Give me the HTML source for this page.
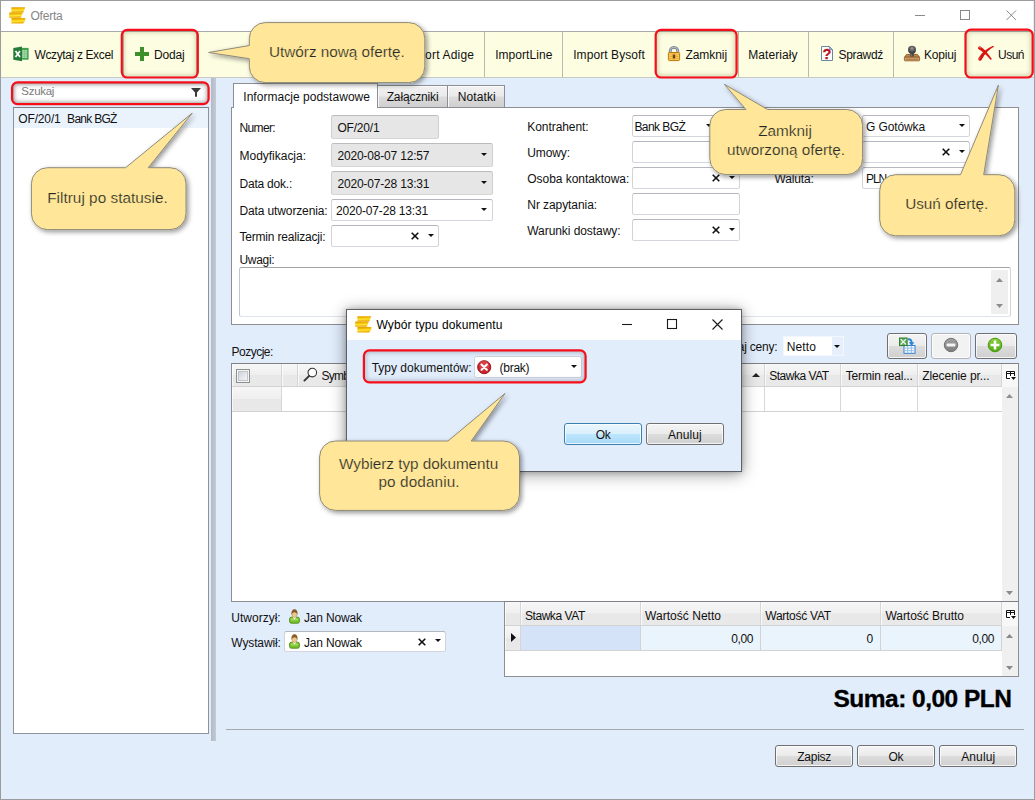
<!DOCTYPE html><html lang="pl"><head><meta charset="utf-8"><title>Oferta</title><style>
html,body{margin:0;padding:0;}
body{width:1035px;height:800px;overflow:hidden;position:relative;background:#E2EDFC;font-family:"Liberation Sans",sans-serif;font-size:12px;color:#111;}
.a{position:absolute;box-sizing:border-box;}
.t{position:absolute;white-space:nowrap;line-height:1;}
.fld{position:absolute;box-sizing:border-box;background:#fff;border:1px solid;border-color:#b4b7bd #d0d3d8 #d3d7dd #d0d3d8;border-radius:2.5px;}
.fld.g{background:#e6e6e6;border-color:#bcbcbc #cfcfcf #d6d6d6 #cfcfcf;}
.red{position:absolute;box-sizing:border-box;border:2px solid #f3141c;border-radius:7px;box-shadow:inset 0 0 5px 1px rgba(60,60,30,.28);}
.ct{-webkit-text-stroke:.22px #FFE699;}
.suma{-webkit-text-stroke:.35px #000;}
.sep{position:absolute;top:32px;height:45px;width:1px;background:#b9b9ad;}
.btn{position:absolute;box-sizing:border-box;border:1px solid #707070;border-radius:3px;background:linear-gradient(#f4f4f4 0%,#ebebeb 48%,#dcdcdc 52%,#d0d0d0 100%);box-shadow:inset 0 0 0 1px rgba(255,255,255,.75);}
.hdr{position:absolute;box-sizing:border-box;background:linear-gradient(#f7f7f7 0%,#efefef 48%,#e8e8e8 52%,#e9e9e9 100%);border-right:1px solid #d6d6d6;border-bottom:1px solid #d2d2d2;box-shadow:inset 1px 0 0 rgba(255,255,255,.7);}
svg{position:absolute;overflow:visible;}
</style></head><body>
<div class="a" style="left:0;top:0;width:1035px;height:800px;border:1px solid #9a9c9e;z-index:50;pointer-events:none"></div>
<div class="a" style="left:1px;top:1px;width:1032px;height:30px;background:#fff"></div>
<div class="a" style="left:1px;top:31px;width:1032px;height:1px;background:#a9a9a9"></div>
<div class="a" style="left:1px;top:32px;width:1032px;height:45px;background:#FDFDE2"></div>
<div class="a" style="left:1px;top:77px;width:1033px;height:1px;background:#c9cac4"></div>
<svg style="left:9px;top:7px" width="17" height="17" viewBox="0 0 17 17"><defs><linearGradient id="g1" x1="0" y1="0" x2=".1" y2="1"><stop offset="0" stop-color="#e39a00"/><stop offset=".3" stop-color="#f2b800"/><stop offset=".62" stop-color="#ffe632"/><stop offset="1" stop-color="#eaa600"/></linearGradient></defs><g fill="url(#g1)"><path d="M2.4 0.2H16.3L14.3 5.4H2.4Z"/><path d="M0.2 5.6H13.8L11.8 10.8H0.2Z"/><path d="M2.4 11H16.3V13.6L14.2 16.4H2.4Z"/></g></svg>
<span class="t " style="left:30.5px;top:9.84px;font-size:12px;color:#868686;letter-spacing:-0.227px;">Oferta</span>
<svg style="left:900px;top:0" width="133" height="31"><g stroke="#8a8a8a" stroke-width="1" fill="none"><path d="M15 15.5H25"/><rect x="60.5" y="10.5" width="9" height="9"/><path d="M106.5 10.5L116 20M116 10.5L106.5 20"/></g></svg>
<svg style="left:13px;top:46px" width="16" height="16" viewBox="0 0 16 16"><rect x="8" y="1.9" width="7.6" height="11.8" fill="#41a04e"/><rect x="9.2" y="4" width="4.9" height="8" fill="#a9d9ae"/><path d="M9.2 5.6H14.1M9.2 7.2H14.1M9.2 8.8H14.1M9.2 10.4H14.1M11.6 4V12" stroke="#74bd7e" stroke-width=".5"/><path d="M0.3 1.9L9 0.4V15.3L0.3 13.7Z" fill="#277b39"/><path d="M2.5 5L7 11M7 5L2.5 11" stroke="#fff" stroke-width="1.7"/></svg>
<span class="t " style="left:34.5px;top:48.84px;font-size:12px;letter-spacing:-0.368px;">Wczytaj z Excel</span>
<svg style="left:135px;top:47px" width="14" height="14" viewBox="0 0 14 14"><path d="M5 0H9V5H14V9H9V14H5V9H0V5H5Z" fill="#3d8f2c"/></svg>
<span class="t " style="left:154px;top:48.84px;font-size:12px;letter-spacing:-0.152px;">Dodaj</span>
<span class="t " style="left:404.5px;top:48.84px;font-size:12px;letter-spacing:0.194px;">Import Adige</span>
<div class="sep" style="left:484px"></div>
<span class="t " style="left:495.2px;top:48.84px;font-size:12px;letter-spacing:0.050px;">ImportLine</span>
<div class="sep" style="left:562px"></div>
<span class="t " style="left:573.2px;top:48.84px;font-size:12px;letter-spacing:0.078px;">Import Bysoft</span>
<svg style="left:667px;top:45px" width="14" height="17" viewBox="0 0 14 17"><path d="M3.2 8V6.1A3.8 3.8 0 0 1 10.8 6.1V8" fill="none" stroke="#6f7889" stroke-width="2.8"/><path d="M3.2 8V6.1A3.8 3.8 0 0 1 10.8 6.1V8" fill="none" stroke="#b4bbc8" stroke-width="1.3"/><rect x="1.4" y="7.5" width="11.2" height="8.1" rx="1" fill="#f2b235" stroke="#c07a10" stroke-width="1"/><rect x="2.5" y="8.6" width="9" height="5.9" fill="#fbdc7e"/><path d="M2.9 9.9H5.5M2.9 11.6H5.5M2.9 13.3H5.5M8.5 9.9H11.1M8.5 11.6H11.1M8.5 13.3H11.1" stroke="#e79f1f" stroke-width=".9"/><rect x="5.9" y="9.4" width="2.2" height="4.2" rx=".5" fill="#5b3b06"/><rect x="5.6" y="8.9" width="2.8" height="5.2" rx=".6" fill="none" stroke="#d9951c" stroke-width=".6"/></svg>
<span class="t " style="left:685.4px;top:48.84px;font-size:12px;letter-spacing:-0.059px;">Zamknij</span>
<span class="t " style="left:748.2px;top:48.84px;font-size:12px;letter-spacing:0.068px;">Materiały</span>
<div class="sep" style="left:808px"></div>
<svg style="left:820px;top:45px" width="14" height="17" viewBox="0 0 14 17"><path d="M1.5 1.5H9.3L12.5 4.7V15.5H1.5Z" fill="#fff" stroke="#6f85a0" stroke-width="1"/><path d="M9.3 1.5V4.7H12.5Z" fill="#aebbd0" stroke="#6f85a0" stroke-width=".8"/><text x="7" y="14.2" font-family="Liberation Sans, sans-serif" font-size="14.5" font-weight="bold" fill="#b8121b" stroke="#b8121b" stroke-width=".3" text-anchor="middle">?</text></svg>
<span class="t " style="left:838.5px;top:48.84px;font-size:12px;letter-spacing:-0.327px;">Sprawdź</span>
<div class="sep" style="left:893px"></div>
<svg style="left:903px;top:45px" width="18" height="17" viewBox="0 0 18 17"><defs><radialGradient id="kn" cx=".5" cy=".35" r=".6"><stop offset="0" stop-color="#9c9c9c"/><stop offset=".55" stop-color="#5a5a5c"/><stop offset="1" stop-color="#38383a"/></radialGradient></defs><path d="M3.6 9.4H14.4L16.6 12.3H1.4Z" fill="#bd8746" stroke="#8f5a28" stroke-width=".9" stroke-linejoin="round"/><rect x="1.4" y="12.2" width="15.2" height="3.6" rx=".8" fill="#d6b389" stroke="#8f5a28" stroke-width=".9"/><rect x="2.6" y="13.6" width="12.8" height="1.3" fill="#b57b3a"/><rect x="7.3" y="7.3" width="3.5" height="4.2" fill="#48484b"/><rect x="8.2" y="7.6" width="1" height="3.6" fill="#77777a"/><circle cx="9" cy="4.7" r="4" fill="url(#kn)"/></svg>
<span class="t " style="left:923.9px;top:48.84px;font-size:12px;letter-spacing:-0.143px;">Kopiuj</span>
<svg style="left:977px;top:45px" width="18" height="17" viewBox="0 0 18 17"><path d="M0.9 2.7Q1.5 0.5 3.5 1.4Q9 5 14.9 14.1L13.7 15Q7.5 7.6 1.7 4.2Q0.7 3.6 0.9 2.7Z" fill="#de1a14"/><path d="M17 0.9L16.5 2.1Q9.2 6 4.8 14.6Q3.8 16.4 2.1 15.5Q0.7 14.7 1.5 13Q6 5 15.6 0.9Z" fill="#d8120e"/><path d="M1.6 2.4Q2.4 1.6 3.6 2.6" stroke="#f5847c" stroke-width="1" fill="none"/><path d="M2.2 14.4Q2.6 13.4 3.4 12.4" stroke="#ef5a52" stroke-width="1" fill="none"/></svg>
<span class="t " style="left:998px;top:48.84px;font-size:12px;letter-spacing:-0.504px;">Usuń</span>
<svg style="left:0;top:0;z-index:5;pointer-events:none" width="1035" height="800"><defs><clipPath id="rc1"><rect x="121.8" y="29.9" width="76" height="47.6" rx="5.4"/></clipPath><filter id="rf1" x="-10%" y="-20%" width="120%" height="140%"><feGaussianBlur stdDeviation="2.2"/></filter></defs><g clip-path="url(#rc1)"><rect x="121.8" y="29.9" width="76" height="47.6" rx="5.4" fill="none" stroke="rgba(90,90,40,.30)" stroke-width="4.6" filter="url(#rf1)"/></g><rect x="121.8" y="29.9" width="76" height="47.6" rx="5.4" fill="none" stroke="#f60f18" stroke-width="2.2"/></svg>
<svg style="left:0;top:0;z-index:5;pointer-events:none" width="1035" height="800"><defs><clipPath id="rc2"><rect x="655.7" y="29.9" width="80.9" height="47.6" rx="5.4"/></clipPath><filter id="rf2" x="-10%" y="-20%" width="120%" height="140%"><feGaussianBlur stdDeviation="2.2"/></filter></defs><g clip-path="url(#rc2)"><rect x="655.7" y="29.9" width="80.9" height="47.6" rx="5.4" fill="none" stroke="rgba(90,90,40,.30)" stroke-width="4.6" filter="url(#rf2)"/></g><rect x="655.7" y="29.9" width="80.9" height="47.6" rx="5.4" fill="none" stroke="#f60f18" stroke-width="2.2"/></svg>
<svg style="left:0;top:0;z-index:5;pointer-events:none" width="1035" height="800"><defs><clipPath id="rc3"><rect x="965.5" y="29.7" width="67.2" height="47.8" rx="5.4"/></clipPath><filter id="rf3" x="-10%" y="-20%" width="120%" height="140%"><feGaussianBlur stdDeviation="2.2"/></filter></defs><g clip-path="url(#rc3)"><rect x="965.5" y="29.7" width="67.2" height="47.8" rx="5.4" fill="none" stroke="rgba(90,90,40,.30)" stroke-width="4.6" filter="url(#rf3)"/></g><rect x="965.5" y="29.7" width="67.2" height="47.8" rx="5.4" fill="none" stroke="#f60f18" stroke-width="2.2"/></svg>
<div class="sep" style="left:123px"></div>
<div class="sep" style="left:196px"></div>
<div class="sep" style="left:738px"></div>
<div class="a" style="left:13px;top:83px;width:196px;height:21px;background:#fff;border:1px solid #d6d6d6;border-radius:4px;box-shadow:inset 0 0 3px rgba(0,0,0,.18)"></div>
<span class="t " style="left:21.3px;top:86.47px;font-size:11.5px;color:#7b7b7b;letter-spacing:-0.289px;">Szukaj</span>
<svg style="left:191px;top:88.2px" width="10" height="8.8" viewBox="0 0 10 8.8"><path d="M0 0H10L6 4.4V8.8H4V4.4Z" fill="#3a3a3a"/></svg>
<div class="a" style="left:13px;top:107px;width:196px;height:627px;background:#fff;border:1px solid #8f9296;border-top-color:#7b7e82"></div>
<div class="a" style="left:14px;top:108px;width:194px;height:20px;background:#EAF3FC"></div>
<svg style="left:0;top:0;z-index:5;pointer-events:none" width="1035" height="800"><defs><clipPath id="rc4"><rect x="12" y="82.4" width="196.6" height="21.7" rx="5.4"/></clipPath><filter id="rf4" x="-10%" y="-20%" width="120%" height="140%"><feGaussianBlur stdDeviation="2.2"/></filter></defs><g clip-path="url(#rc4)"><rect x="12" y="82.4" width="196.6" height="21.7" rx="5.4" fill="none" stroke="rgba(60,60,60,.38)" stroke-width="4.6" filter="url(#rf4)"/></g><rect x="12" y="82.4" width="196.6" height="21.7" rx="5.4" fill="none" stroke="#f60f18" stroke-width="2.2"/></svg>
<span class="t " style="left:18.3px;top:113.04px;font-size:12px;letter-spacing:-0.151px;">OF/20/1</span>
<span class="t " style="left:67.1px;top:113.04px;font-size:12px;letter-spacing:-0.720px;">Bank BGŻ</span>
<div class="a" style="left:211px;top:78px;width:5px;height:663px;background:linear-gradient(90deg,#b3bac6,#c3cad6)"></div>
<div class="a" style="left:377px;top:85px;width:71px;height:23px;border:1px solid #8c8e94;background:linear-gradient(#f2f2f2 0%,#eaeaea 48%,#dcdcdc 52%,#cfcfcf 100%);box-shadow:inset 1px 1px 0 rgba(255,255,255,.8)"></div>
<div class="a" style="left:447px;top:85px;width:58px;height:23px;border:1px solid #8c8e94;background:linear-gradient(#f2f2f2 0%,#eaeaea 48%,#dcdcdc 52%,#cfcfcf 100%);box-shadow:inset 1px 1px 0 rgba(255,255,255,.8)"></div>
<div class="a" style="left:231px;top:107px;width:788px;height:218px;background:#fff;border:1px solid #8c8e94"></div>
<div class="a" style="left:233px;top:83px;width:145px;height:25px;background:#fff;border:1px solid #8c8e94;border-bottom:none"></div>
<span class="t " style="left:243.3px;top:90.84px;font-size:12px;letter-spacing:0.030px;">Informacje podstawowe</span>
<span class="t " style="left:386.7px;top:90.84px;font-size:12px;letter-spacing:-0.156px;">Załączniki</span>
<span class="t " style="left:457.8px;top:90.84px;font-size:12px;letter-spacing:0.106px;">Notatki</span>
<span class="t " style="left:239.5px;top:122.04px;font-size:12px;letter-spacing:-0.641px;">Numer:</span>
<span class="t " style="left:239.5px;top:150.04px;font-size:12px;letter-spacing:-0.017px;">Modyfikacja:</span>
<span class="t " style="left:239.5px;top:178.04px;font-size:12px;letter-spacing:-0.220px;">Data dok.:</span>
<span class="t " style="left:239.5px;top:205.04px;font-size:12px;letter-spacing:-0.128px;">Data utworzenia:</span>
<span class="t " style="left:239.5px;top:231.04px;font-size:12px;letter-spacing:-0.198px;">Termin realizacji:</span>
<span class="t " style="left:239.5px;top:254.04px;font-size:12px;letter-spacing:-0.315px;">Uwagi:</span>
<div class="fld g" style="left:331px;top:115px;width:108px;height:24px"></div>
<div class="fld g" style="left:331px;top:143px;width:162px;height:24px"></div>
<div class="fld g" style="left:331px;top:171px;width:162px;height:24px"></div>
<div class="fld" style="left:331px;top:199px;width:162px;height:22px"></div>
<div class="fld" style="left:331px;top:225px;width:108px;height:22px"></div>
<span class="t " style="left:337.4px;top:122.04px;font-size:12px;letter-spacing:-0.194px;">OF/20/1</span>
<span class="t " style="left:337.4px;top:150.04px;font-size:12px;letter-spacing:-0.178px;">2020-08-07 12:57</span>
<span class="t " style="left:337.4px;top:178.04px;font-size:12px;letter-spacing:-0.178px;">2020-07-28 13:31</span>
<span class="t " style="left:336px;top:205.04px;font-size:12px;letter-spacing:-0.172px;">2020-07-28 13:31</span>
<svg style="left:480.5px;top:152.9px" width="6" height="3" viewBox="0 0 6 3"><path d="M0 0H6L3 3Z" fill="#111"/></svg>
<svg style="left:480.5px;top:180.9px" width="6" height="3" viewBox="0 0 6 3"><path d="M0 0H6L3 3Z" fill="#111"/></svg>
<svg style="left:480.5px;top:208.4px" width="6" height="3" viewBox="0 0 6 3"><path d="M0 0H6L3 3Z" fill="#111"/></svg>
<svg style="left:411px;top:232.2px" width="8" height="8" viewBox="0 0 8 8"><path d="M0.7 0.7L7.3 7.3M7.3 0.7L0.7 7.3" stroke="#111" stroke-width="1.6"/></svg>
<svg style="left:428px;top:234.4px" width="6" height="3" viewBox="0 0 6 3"><path d="M0 0H6L3 3Z" fill="#111"/></svg>
<span class="t " style="left:527.3px;top:121.04px;font-size:12px;letter-spacing:-0.068px;">Kontrahent:</span>
<span class="t " style="left:527.3px;top:147.04px;font-size:12px;letter-spacing:-0.124px;">Umowy:</span>
<span class="t " style="left:527.3px;top:173.04px;font-size:12px;letter-spacing:-0.049px;">Osoba kontaktowa:</span>
<span class="t " style="left:527.3px;top:199.04px;font-size:12px;letter-spacing:-0.077px;">Nr zapytania:</span>
<span class="t " style="left:527.3px;top:225.04px;font-size:12px;letter-spacing:-0.067px;">Warunki dostawy:</span>
<div class="fld" style="left:632px;top:115px;width:108px;height:22px"></div>
<div class="fld" style="left:632px;top:141px;width:108px;height:22px"></div>
<div class="fld" style="left:632px;top:167px;width:108px;height:22px"></div>
<div class="fld" style="left:632px;top:193px;width:108px;height:22px"></div>
<div class="fld" style="left:632px;top:219px;width:108px;height:22px"></div>
<span class="t " style="left:634.4px;top:121.04px;font-size:12px;letter-spacing:-0.570px;">Bank BGŻ</span>
<svg style="left:706px;top:124.4px" width="6" height="3" viewBox="0 0 6 3"><path d="M0 0H6L3 3Z" fill="#111"/></svg>
<svg style="left:711.5px;top:173.7px" width="8" height="8" viewBox="0 0 8 8"><path d="M0.7 0.7L7.3 7.3M7.3 0.7L0.7 7.3" stroke="#111" stroke-width="1.6"/></svg>
<svg style="left:728.5px;top:175.9px" width="6" height="3" viewBox="0 0 6 3"><path d="M0 0H6L3 3Z" fill="#111"/></svg>
<svg style="left:711.5px;top:225.7px" width="8" height="8" viewBox="0 0 8 8"><path d="M0.7 0.7L7.3 7.3M7.3 0.7L0.7 7.3" stroke="#111" stroke-width="1.6"/></svg>
<svg style="left:728.5px;top:227.9px" width="6" height="3" viewBox="0 0 6 3"><path d="M0 0H6L3 3Z" fill="#111"/></svg>
<div class="fld" style="left:862px;top:115px;width:108px;height:22px"></div>
<div class="fld" style="left:862px;top:141px;width:108px;height:22px"></div>
<div class="fld" style="left:862px;top:167px;width:108px;height:22px"></div>
<span class="t " style="left:774.5px;top:173.04px;font-size:12px;letter-spacing:-0.150px;">Waluta:</span>
<span class="t " style="left:866px;top:121.04px;font-size:12px;letter-spacing:-0.115px;">G Gotówka</span>
<svg style="left:958.5px;top:124.4px" width="6" height="3" viewBox="0 0 6 3"><path d="M0 0H6L3 3Z" fill="#111"/></svg>
<svg style="left:941.5px;top:148.2px" width="8" height="8" viewBox="0 0 8 8"><path d="M0.7 0.7L7.3 7.3M7.3 0.7L0.7 7.3" stroke="#111" stroke-width="1.6"/></svg>
<svg style="left:958.5px;top:150.4px" width="6" height="3" viewBox="0 0 6 3"><path d="M0 0H6L3 3Z" fill="#111"/></svg>
<span class="t " style="left:866px;top:173.04px;font-size:12px;letter-spacing:-1.115px;">PLN</span>
<div class="fld" style="left:239px;top:267px;width:772px;height:50px;border-color:#a2a4a8 #d0d3d8 #dfe4eb #c2c5ca"></div>
<div class="a" style="left:991px;top:270px;width:17px;height:44px;background:#efefef"></div>
<svg style="left:996px;top:277.6px" width="7" height="4"><path d="M0 4H7L3.5 0Z" fill="#8c8c8c"/></svg>
<svg style="left:996px;top:304.2px" width="7" height="4"><path d="M0 0H7L3.5 4Z" fill="#8c8c8c"/></svg>
<span class="t " style="left:231.6px;top:346.04px;font-size:12px;letter-spacing:-0.520px;">Pozycje:</span>
<span class="t " style="left:710.5px;top:341.04px;font-size:12px;letter-spacing:-0.198px;">Rodzaj ceny:</span>
<div class="a" style="left:783px;top:336px;width:61px;height:20px;background:#fff;border:1px solid #f2f7fe"></div>
<div class="a" style="left:832px;top:337px;width:11px;height:18px;background:#e6effb"></div>
<span class="t " style="left:786.7px;top:341.04px;font-size:12px;letter-spacing:0.122px;">Netto</span>
<svg style="left:834.4px;top:345.09999999999997px" width="6" height="3" viewBox="0 0 6 3"><path d="M0 0H6L3 3Z" fill="#111"/></svg>
<div class="btn" style="left:887px;top:333px;width:40px;height:26px"></div>
<div class="btn" style="left:931px;top:333px;width:40px;height:26px;border-color:#b5b5b5;background:#f2f2f2"></div>
<div class="btn" style="left:975px;top:333px;width:42px;height:26px"></div>
<svg style="left:899px;top:337px" width="17" height="17" viewBox="0 0 17 17"><rect x="5" y="8.5" width="11" height="7.8" fill="#fff" stroke="#2f7fd0" stroke-width="1"/><path d="M8.7 8.5V16.3M12.3 8.5V16.3M5 11.1H16M5 13.7H16" stroke="#86b6e6" stroke-width=".9"/><rect x="0.5" y="1" width="7.6" height="7.6" fill="#5fae5c" stroke="#2f7d32" stroke-width="1"/><path d="M1.6 2.1L7 7.5M7 2.1L1.6 7.5" stroke="#e9f6e8" stroke-width="1.3"/><path d="M9 2.2C12 2 12.6 3.6 12.6 6" fill="none" stroke="#2b86d6" stroke-width="1.9"/><path d="M9.9 5.3H15.3L12.6 8.9Z" fill="#2b86d6"/></svg>
<svg style="left:943px;top:337px" width="16" height="16" viewBox="0 0 16 16"><defs><linearGradient id="mg" x1="0" y1="0" x2="0" y2="1"><stop offset="0" stop-color="#a3a3a3"/><stop offset="1" stop-color="#7d7d7d"/></linearGradient></defs><circle cx="8" cy="8" r="6.7" fill="url(#mg)" stroke="#727272" stroke-width="1"/><rect x="3.6" y="6.6" width="8.8" height="2.8" rx=".6" fill="#f4f4f4"/></svg>
<svg style="left:987.2px;top:337px" width="16" height="16" viewBox="0 0 16 16"><defs><linearGradient id="pg" x1="0" y1="0" x2="0" y2="1"><stop offset="0" stop-color="#8ed13a"/><stop offset="1" stop-color="#4fa512"/></linearGradient></defs><circle cx="8" cy="8" r="6.8" fill="url(#pg)" stroke="#4a9a10" stroke-width="1"/><path d="M6.7 3.6H9.3V6.7H12.4V9.3H9.3V12.4H6.7V9.3H3.6V6.7H6.7Z" fill="#fff"/></svg>
<div class="a" style="left:231px;top:363px;width:788px;height:239px;background:#fff;border:1px solid #8c8e94;border-top-color:#7f8186"></div>
<div class="hdr" style="left:232px;top:364px;width:50px;height:23px"></div>
<div class="hdr" style="left:282px;top:364px;width:16px;height:23px"></div>
<div class="hdr" style="left:298px;top:364px;width:467px;height:23px"></div>
<div class="hdr" style="left:765px;top:364px;width:76px;height:23px"></div>
<div class="hdr" style="left:841px;top:364px;width:77px;height:23px"></div>
<div class="hdr" style="left:918px;top:364px;width:84px;height:23px"></div>
<div class="hdr" style="left:1002px;top:364px;width:16px;height:23px"></div>
<div class="hdr" style="left:232px;top:387px;width:50px;height:25px"></div>
<div class="a" style="left:282px;top:387px;width:720px;height:25px;border-bottom:1px solid #d2d2d2"></div>
<div class="a" style="left:764px;top:387px;width:1px;height:24px;background:#d8d8d8"></div>
<div class="a" style="left:840px;top:387px;width:1px;height:24px;background:#d8d8d8"></div>
<div class="a" style="left:917px;top:387px;width:1px;height:24px;background:#d8d8d8"></div>
<div class="a" style="left:1002px;top:387px;width:16px;height:214px;background:#f0f0f0"></div>
<svg style="left:1006px;top:394px" width="7" height="4"><path d="M0 4H7L3.5 0Z" fill="#8f8f8f"/></svg>
<svg style="left:1006px;top:591px" width="7" height="4"><path d="M0 0H7L3.5 4Z" fill="#8a8a8a"/></svg>
<div class="a" style="left:236px;top:369px;width:14px;height:14px;border:1px solid #8e8f8f;background:#f4f4f4"></div>
<div class="a" style="left:238px;top:371px;width:10px;height:10px;background:linear-gradient(135deg,#cfd3d9,#f4f5f7);border:1px solid #c2c6cc"></div>
<svg style="left:303px;top:367px" width="15" height="15" viewBox="0 0 15 15"><circle cx="9.3" cy="5.6" r="4.3" fill="#fdfdfd" stroke="#333" stroke-width="1.1"/><path d="M6.2 8.8L1.4 13.6" stroke="#333" stroke-width="1.9" stroke-linecap="round"/></svg>
<span class="t " style="left:321.5px;top:370.04px;font-size:12px;letter-spacing:-0.753px;">Symbol</span>
<svg style="left:752px;top:373px" width="8" height="4"><path d="M0 4H8L4 0Z" fill="#222"/></svg>
<span class="t " style="left:769.2px;top:370.04px;font-size:12px;letter-spacing:-0.475px;">Stawka VAT</span>
<span class="t " style="left:845.8px;top:370.04px;font-size:12px;letter-spacing:-0.176px;">Termin real...</span>
<span class="t " style="left:922.2px;top:370.04px;font-size:12px;letter-spacing:-0.107px;">Zlecenie pr...</span>
<div class="a" style="left:1002px;top:364px;width:16px;height:23px;background:#f7f7f7"></div>
<svg style="left:1005px;top:370px" width="12" height="11" viewBox="0 0 12 11"><rect x="0.5" y="0.5" width="10" height="9.5" fill="#fff" opacity=".85"/><path d="M5 8.5H1.5V1.5H9.5V6M1.5 3.5H9.5M5.5 1.5V6" fill="none" stroke="#111" stroke-width="1"/><path d="M6 7H11L8.5 10Z" fill="#111"/></svg>
<span class="t " style="left:231.3px;top:612.04px;font-size:12px;letter-spacing:0.006px;">Utworzył:</span>
<svg style="left:288.5px;top:608.5px" width="11" height="15" viewBox="0 0 11 15"><rect x="0.6" y="8.2" width="9.8" height="6" rx="1.7" fill="#79c02e" stroke="#4c8a12" stroke-width=".9"/><rect x="1.6" y="9.2" width="7.8" height="2.2" rx="1" fill="#a9de62" opacity=".8"/><path d="M3.6 7.9L5.5 10.4L7.4 7.9Z" fill="#fff"/><ellipse cx="5.5" cy="5.5" rx="2.4" ry="2.9" fill="#eac88f" stroke="#b58848" stroke-width=".5"/><path d="M2.5 6.2C2 1.6 3.9 0.2 5.5 0.2S9 1.6 8.5 6.2C8.1 4.1 7 3.3 5.5 3.3S2.9 4.1 2.5 6.2Z" fill="#8a5a22"/></svg>
<span class="t " style="left:303.9px;top:612.04px;font-size:12px;letter-spacing:-0.164px;">Jan Nowak</span>
<span class="t " style="left:231.3px;top:637.04px;font-size:12px;letter-spacing:-0.129px;">Wystawił:</span>
<div class="fld" style="left:284px;top:631px;width:162px;height:21px"></div>
<svg style="left:288.5px;top:633.8px" width="11" height="15" viewBox="0 0 11 15"><rect x="0.6" y="8.2" width="9.8" height="6" rx="1.7" fill="#79c02e" stroke="#4c8a12" stroke-width=".9"/><rect x="1.6" y="9.2" width="7.8" height="2.2" rx="1" fill="#a9de62" opacity=".8"/><path d="M3.6 7.9L5.5 10.4L7.4 7.9Z" fill="#fff"/><ellipse cx="5.5" cy="5.5" rx="2.4" ry="2.9" fill="#eac88f" stroke="#b58848" stroke-width=".5"/><path d="M2.5 6.2C2 1.6 3.9 0.2 5.5 0.2S9 1.6 8.5 6.2C8.1 4.1 7 3.3 5.5 3.3S2.9 4.1 2.5 6.2Z" fill="#8a5a22"/></svg>
<span class="t " style="left:303.9px;top:637.04px;font-size:12px;letter-spacing:-0.164px;">Jan Nowak</span>
<svg style="left:418px;top:637.7px" width="8" height="8" viewBox="0 0 8 8"><path d="M0.7 0.7L7.3 7.3M7.3 0.7L0.7 7.3" stroke="#111" stroke-width="1.6"/></svg>
<svg style="left:435px;top:639.4px" width="6" height="3" viewBox="0 0 6 3"><path d="M0 0H6L3 3Z" fill="#111"/></svg>
<div class="a" style="left:504px;top:601px;width:515px;height:76px;background:#fff;border:1px solid #8c8e94;border-top-color:#7f8186"></div>
<div class="hdr" style="left:505px;top:602px;width:16px;height:24px"></div>
<div class="hdr" style="left:521px;top:602px;width:120px;height:24px"></div>
<div class="hdr" style="left:641px;top:602px;width:120px;height:24px"></div>
<div class="hdr" style="left:761px;top:602px;width:120px;height:24px"></div>
<div class="hdr" style="left:881px;top:602px;width:121px;height:24px"></div>
<div class="hdr" style="left:1002px;top:602px;width:16px;height:24px"></div>
<div class="hdr" style="left:505px;top:626px;width:16px;height:25px"></div>
<div class="a" style="left:521px;top:626px;width:120px;height:25px;background:#D4E3F7;border-right:1px solid #d2d2d2;border-bottom:1px solid #d2d2d2"></div>
<div class="a" style="left:641px;top:626px;width:120px;height:25px;background:#EAF4FD;border-right:1px solid #d2d2d2;border-bottom:1px solid #d2d2d2"></div>
<div class="a" style="left:761px;top:626px;width:120px;height:25px;background:#EAF4FD;border-right:1px solid #d2d2d2;border-bottom:1px solid #d2d2d2"></div>
<div class="a" style="left:881px;top:626px;width:121px;height:25px;background:#EAF4FD;border-right:1px solid #d2d2d2;border-bottom:1px solid #d2d2d2"></div>
<svg style="left:511px;top:633px" width="5" height="9"><path d="M0 0V9L5 4.5Z" fill="#111"/></svg>
<div class="a" style="left:1002px;top:626px;width:16px;height:50px;background:#f0f0f0"></div>
<svg style="left:1006px;top:633.5px" width="7" height="4"><path d="M0 4H7L3.5 0Z" fill="#8a8a8a"/></svg>
<svg style="left:1006px;top:665.7px" width="7" height="4"><path d="M0 0H7L3.5 4Z" fill="#8a8a8a"/></svg>
<div class="a" style="left:1002px;top:602px;width:16px;height:24px;background:#f7f7f7"></div>
<svg style="left:1005px;top:609px" width="12" height="11" viewBox="0 0 12 11"><rect x="0.5" y="0.5" width="10" height="9.5" fill="#fff" opacity=".85"/><path d="M5 8.5H1.5V1.5H9.5V6M1.5 3.5H9.5M5.5 1.5V6" fill="none" stroke="#111" stroke-width="1"/><path d="M6 7H11L8.5 10Z" fill="#111"/></svg>
<span class="t " style="left:524.9px;top:610.04px;font-size:12px;letter-spacing:-0.425px;">Stawka VAT</span>
<span class="t " style="left:645.1px;top:610.04px;font-size:12px;letter-spacing:0.025px;">Wartość Netto</span>
<span class="t " style="left:765.3px;top:610.04px;font-size:12px;letter-spacing:-0.268px;">Wartość VAT</span>
<span class="t " style="left:885.4px;top:610.04px;font-size:12px;letter-spacing:-0.030px;">Wartość Brutto</span>
<span class="t " style="left:731.2px;top:633.04px;font-size:12px;letter-spacing:-0.390px;">0,00</span>
<span class="t " style="left:866.5px;top:633.04px;font-size:12px;">0</span>
<span class="t " style="left:972.3px;top:633.04px;font-size:12px;letter-spacing:-0.415px;">0,00</span>
<span class="t suma" style="left:833.5px;top:686.96px;font-size:24.5px;color:#000;font-weight:bold;letter-spacing:-0.513px;">Suma: 0,00 PLN</span>
<div class="a" style="left:226px;top:729px;width:798px;height:1px;background:#a5a8ad"></div>
<div class="btn" style="left:775px;top:745px;width:78px;height:22px"></div>
<div class="btn" style="left:857px;top:745px;width:78px;height:22px"></div>
<div class="btn" style="left:939px;top:745px;width:78px;height:22px"></div>
<span class="t " style="left:797.3px;top:751.04px;font-size:12px;letter-spacing:-0.274px;">Zapisz</span>
<span class="t " style="left:888.5px;top:751.04px;font-size:12px;letter-spacing:-0.322px;">Ok</span>
<span class="t " style="left:961.2px;top:751.04px;font-size:12px;letter-spacing:0.123px;">Anuluj</span>
<div class="a" style="left:346px;top:309px;width:396px;height:163px;background:#E2EDFC;border:1px solid #5d5f63;box-shadow:0 2px 15px rgba(0,0,0,.42),0 0 5px rgba(0,0,0,.2);z-index:10"></div>
<div class="a" style="left:347px;top:310px;width:394px;height:30px;background:#fff;z-index:11"></div>
<svg style="z-index:12;left:355px;top:316px" width="17" height="17" viewBox="0 0 17 17"><defs><linearGradient id="g2" x1="0" y1="0" x2=".1" y2="1"><stop offset="0" stop-color="#e39a00"/><stop offset=".3" stop-color="#f2b800"/><stop offset=".62" stop-color="#ffe632"/><stop offset="1" stop-color="#eaa600"/></linearGradient></defs><g fill="url(#g2)"><path d="M2.4 0.2H16.3L14.3 5.4H2.4Z"/><path d="M0.2 5.6H13.8L11.8 10.8H0.2Z"/><path d="M2.4 11H16.3V13.6L14.2 16.4H2.4Z"/></g></svg>
<span class="t " style="left:376.5px;top:319.04px;font-size:12px;color:#000;letter-spacing:0.135px;z-index:12;">Wybór typu dokumentu</span>
<svg style="left:600px;top:310px;z-index:12" width="140" height="30"><g stroke="#1a1a1a" stroke-width="1.1" fill="none"><path d="M22 14.5H32"/><rect x="67.5" y="9.5" width="9" height="9"/><path d="M112.5 9.5L122.5 19.5M122.5 9.5L112.5 19.5"/></g></svg>
<span class="t " style="left:371.7px;top:362.04px;font-size:12px;letter-spacing:-0.010px;z-index:12;">Typy dokumentów:</span>
<div class="fld" style="left:474px;top:356px;width:108px;height:22px;z-index:12;border-color:#d0d4da"></div>
<svg style="left:477px;top:360.4px;z-index:13" width="14.4" height="14.4" viewBox="0 0 16 16"><circle cx="8" cy="8" r="7.3" fill="#c8242b" stroke="#8e1117" stroke-width="1"/><circle cx="8" cy="6.3" r="5.5" fill="#e2575c" opacity=".55"/><path d="M5 5L11 11M11 5L5 11" stroke="#fff" stroke-width="2.3" stroke-linecap="round"/></svg>
<span class="t " style="left:499.6px;top:362.04px;font-size:12px;letter-spacing:-0.291px;z-index:13;">(brak)</span>
<svg style="z-index:13;left:570.7px;top:364.79999999999995px" width="6" height="3" viewBox="0 0 6 3"><path d="M0 0H6L3 3Z" fill="#111"/></svg>
<svg style="left:0;top:0;z-index:13;pointer-events:none" width="1035" height="800"><defs><clipPath id="rc5"><rect x="363.9" y="350.4" width="221.7" height="31.9" rx="5.4"/></clipPath><filter id="rf5" x="-10%" y="-20%" width="120%" height="140%"><feGaussianBlur stdDeviation="2.2"/></filter></defs><g clip-path="url(#rc5)"><rect x="363.9" y="350.4" width="221.7" height="31.9" rx="5.4" fill="none" stroke="rgba(60,70,90,.32)" stroke-width="4.6" filter="url(#rf5)"/></g><rect x="363.9" y="350.4" width="221.7" height="31.9" rx="5.4" fill="none" stroke="#f60f18" stroke-width="2.2"/></svg>
<div class="btn" style="left:564px;top:423px;width:78px;height:22px;z-index:12;border-color:#3c7fb1;background:linear-gradient(#eaf6fd 0%,#d9f0fc 48%,#bee6fd 52%,#a7d9f5 100%)"></div>
<div class="btn" style="left:646px;top:423px;width:78px;height:22px;z-index:12"></div>
<span class="t " style="left:595.7px;top:429.04px;font-size:12px;letter-spacing:-0.372px;z-index:13;">Ok</span>
<span class="t " style="left:668px;top:429.04px;font-size:12px;letter-spacing:0.040px;z-index:13;">Anuluj</span>
<svg style="left:0;top:0;z-index:20" width="1035" height="800"><defs><filter id="cs" x="-10%" y="-10%" width="125%" height="125%"><feGaussianBlur in="SourceAlpha" stdDeviation="2.5"/><feOffset dx="2" dy="2.2"/><feComponentTransfer><feFuncA type="linear" slope=".42"/></feComponentTransfer><feMerge><feMergeNode/><feMergeNode in="SourceGraphic"/></feMerge></filter></defs><g fill="#FFE699" stroke="#8f8a78" stroke-width="1" stroke-linejoin="round" filter="url(#cs)">
<path d="M265.3 22.6 L408.8 22.6 A16 16 0 0 1 424.8 38.6 L424.8 66.6 A16 16 0 0 1 408.8 82.6 L265.3 82.6 A16 16 0 0 1 249.3 66.6 L249.3 58.7 L208.6 52.5 L249.3 45.5 L249.3 38.6 A16 16 0 0 1 265.3 22.6 Z"/>
<path d="M47.4 167.7 L125.6 167.7 L192.2 113.2 L148.2 167.7 L170 167.7 A16 16 0 0 1 186 183.7 L186 213.6 A16 16 0 0 1 170 229.6 L47.4 229.6 A16 16 0 0 1 31.4 213.6 L31.4 183.7 A16 16 0 0 1 47.4 167.7 Z"/>
<path d="M725.8 109.5 L746 109.5 L724.4 84.3 L767.5 109.5 L846.6 109.5 A16 16 0 0 1 862.6 125.5 L862.6 158.6 A16 16 0 0 1 846.6 174.6 L725.8 174.6 A16 16 0 0 1 709.8 158.6 L709.8 125.5 A16 16 0 0 1 725.8 109.5 Z"/>
<path d="M895.7 174.7 L960.5 174.7 L998.4 85.1 L983.7 174.7 L998.8 174.7 A16 16 0 0 1 1014.8 190.7 L1014.8 219.8 A16 16 0 0 1 998.8 235.8 L895.7 235.8 A16 16 0 0 1 879.7 219.8 L879.7 190.7 A16 16 0 0 1 895.7 174.7 Z"/>
<path d="M335.6 441 L448 441 L505 393.5 L471.2 441 L503.5 441 A16 16 0 0 1 519.5 457 L519.5 494.4 A16 16 0 0 1 503.5 510.4 L335.6 510.4 A16 16 0 0 1 319.6 494.4 L319.6 457 A16 16 0 0 1 335.6 441 Z"/>
</g></svg>
<span class="t ct" style="left:269px;top:44.05px;font-size:15.3px;color:#262626;letter-spacing:-0.012px;z-index:21;">Utwórz nową ofertę.</span>
<span class="t ct" style="left:47.2px;top:189.75px;font-size:15.3px;color:#262626;letter-spacing:0.036px;z-index:21;">Filtruj po statusie.</span>
<span class="t ct" style="left:758.2px;top:123.05px;font-size:15.3px;color:#262626;letter-spacing:0.008px;z-index:21;">Zamknij</span>
<span class="t ct" style="left:727px;top:142.05px;font-size:15.3px;color:#262626;letter-spacing:-0.012px;z-index:21;">utworzoną ofertę.</span>
<span class="t ct" style="left:905.2px;top:195.55px;font-size:15.3px;color:#262626;letter-spacing:-0.027px;z-index:21;">Usuń ofertę.</span>
<span class="t ct" style="left:339px;top:455.85px;font-size:15.3px;color:#262626;letter-spacing:-0.019px;z-index:21;">Wybierz typ dokumentu</span>
<span class="t ct" style="left:378.5px;top:474.35px;font-size:15.3px;color:#262626;letter-spacing:0.103px;z-index:21;">po dodaniu.</span>
</body></html>
